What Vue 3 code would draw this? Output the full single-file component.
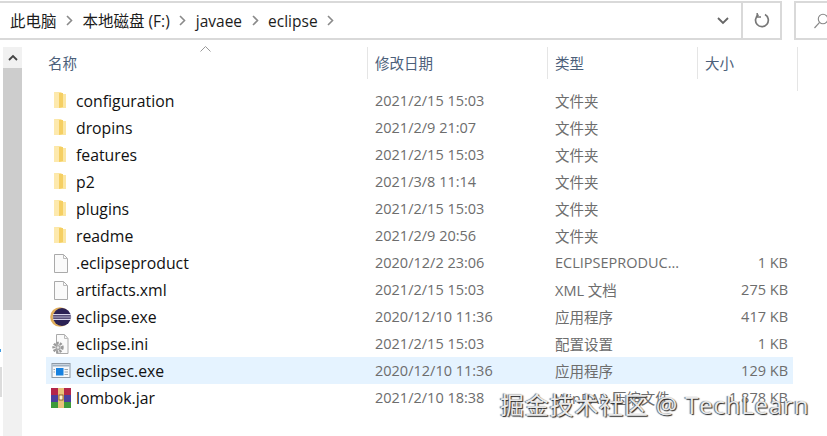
<template>
  <div class="explorer">
    <div class="toolbar">
      <div class="address">
        <div class="crumbs">
          <template v-for="c in crumbs" :key="c">
            <span class="crumb">{{ c }}</span>
            <svg class="sep" width="7" height="11" viewBox="0 0 7 11"><path d="M1 1l4.5 4.5L1 10" fill="none" stroke="#8a8a8a" stroke-width="1.6" /></svg>
          </template>
        </div>
        <div class="drop">
          <svg width="12" height="8" viewBox="0 0 12 8"><path d="M1 1l5 5 5-5" fill="none" stroke="#666" stroke-width="1.8" /></svg>
        </div>
        <div class="refresh">
          <svg width="16" height="17" viewBox="0 0 16 17"><path d="M4.5 2.8A6.4 6.4 0 1 0 11 2.6" fill="none" stroke="#777" stroke-width="1.7" /><path d="M3.2 1v4h3.8" fill="none" stroke="#777" stroke-width="1.5" /></svg>
        </div>
      </div>
      <div class="search">
        <svg width="16" height="16" viewBox="0 0 16 16"><circle cx="10" cy="6" r="4.7" fill="none" stroke="#888" stroke-width="1.1" /><path d="M6.6 9.4L1.5 15" stroke="#888" stroke-width="1.2" /></svg>
      </div>
    </div>
    <div class="main">
      <div class="scrollbar">
        <div class="sb-btn">
          <svg width="10" height="7" viewBox="0 0 10 7"><path d="M1 6l4-4 4 4" fill="none" stroke="#444" stroke-width="1.8" /></svg>
        </div>
        <div class="sb-thumb"></div>
      </div>
      <div class="content">
        <div class="head">
          <svg class="sort" width="11" height="6" viewBox="0 0 11 6"><path d="M.5 5.5l5-5 5 5" fill="none" stroke="#999" /></svg>
          <div class="hcell">名称</div>
          <div class="hcell">修改日期</div>
          <div class="hcell">类型</div>
          <div class="hcell">大小</div>
        </div>
        <div class="rows">
          <div v-for="f in files" :key="f.name" class="row" :class="{ selected: f.name === 'eclipsec.exe' }">
            <div class="name">
              <svg class="icon" width="22" height="22" viewBox="0 0 22 22">
                <template v-if="f.icon === 'folder'">
                  <path d="M4 2h7l2 2h3v14H4z" fill="#fbe6a2" />
                  <path d="M9 3h4v14l-4 1z" fill="#f5cf63" />
                  <path d="M4 2l5 1v15H4z" fill="#fde9ad" />
                </template>
                <template v-else-if="f.icon === 'file'">
                  <path d="M4.5 2.5h9l4 4v14h-13z" fill="#fafafa" stroke="#aaa" />
                  <path d="M13.5 2.5v4h4" fill="none" stroke="#bbb" />
                </template>
                <template v-else-if="f.icon === 'eclipse'">
                  <circle cx="10" cy="11" r="9.8" fill="#e0ae5c" />
                  <circle cx="12" cy="11" r="9" fill="#2c2255" />
                  <path d="M3 8.6h18M2.6 11h19M3 13.4h18" stroke="#d6d4ea" stroke-width="1.2" />
                </template>
                <template v-else-if="f.icon === 'ini'">
                  <path d="M6.5 1.5h8l3.5 4v15h-11.5z" fill="#fafafa" stroke="#aaa" />
                  <path d="M14.5 1.5v4h3.5" fill="none" stroke="#bbb" />
                  <circle cx="8" cy="14.5" r="4.2" fill="none" stroke="#9a9a9a" stroke-width="3" stroke-dasharray="2 1" />
                  <circle cx="8" cy="14.5" r="2.6" fill="#a8a8a8" />
                  <circle cx="8" cy="14.5" r="1.2" fill="#e6e6e6" />
                </template>
                <template v-else-if="f.icon === 'exe'">
                  <rect x="2" y="3.5" width="18" height="14" fill="#f6f8fa" stroke="#8e9aa6" />
                  <path d="M2.5 5.5h17" stroke="#9fb1c2" stroke-width="2" />
                  <rect x="6" y="8" width="7.5" height="7.5" fill="#1681e0" />
                  <path d="M14.5 9.5h3.5M14.5 12h3.5M14.5 14.5h3.5M3.5 9.5h1.5M3.5 12h1.5" stroke="#9aa5af" />
                </template>
                <template v-else>
                  <rect x="1" y="1" width="20" height="7" fill="#b3264a" />
                  <rect x="1" y="8" width="20" height="7" fill="#4a3f9e" />
                  <rect x="1" y="15" width="20" height="6" fill="#3c9a3a" />
                  <rect x="8" y="1" width="6" height="20" fill="#e8c27a" />
                  <rect x="9" y="8" width="4" height="5" fill="#fff2cf" stroke="#7a4d17" stroke-width=".8" />
                </template>
              </svg>
              <span class="fname">{{ f.name }}</span>
            </div>
            <div class="cell">{{ f.date }}</div>
            <div class="cell">{{ f.type }}</div>
            <div class="cell size">{{ f.size }}</div>
          </div>
        </div>
      </div>
    </div>
    <div class="edge-dot"></div>
    <div class="edge-bar"></div>
    <div class="watermark">掘金技术社区 @ TechLearn</div>
  </div>
</template>

<script setup>
const crumbs = ['此电脑', '本地磁盘 (F:)', 'javaee', 'eclipse']

const files = [
  { name: 'configuration', date: '2021/2/15 15:03', type: '文件夹', size: '', icon: 'folder' },
  { name: 'dropins', date: '2021/2/9 21:07', type: '文件夹', size: '', icon: 'folder' },
  { name: 'features', date: '2021/2/15 15:03', type: '文件夹', size: '', icon: 'folder' },
  { name: 'p2', date: '2021/3/8 11:14', type: '文件夹', size: '', icon: 'folder' },
  { name: 'plugins', date: '2021/2/15 15:03', type: '文件夹', size: '', icon: 'folder' },
  { name: 'readme', date: '2021/2/9 20:56', type: '文件夹', size: '', icon: 'folder' },
  { name: '.eclipseproduct', date: '2020/12/2 23:06', type: 'ECLIPSEPRODUC...', size: '1 KB', icon: 'file' },
  { name: 'artifacts.xml', date: '2021/2/15 15:03', type: 'XML 文档', size: '275 KB', icon: 'file' },
  { name: 'eclipse.exe', date: '2020/12/10 11:36', type: '应用程序', size: '417 KB', icon: 'eclipse' },
  { name: 'eclipse.ini', date: '2021/2/15 15:03', type: '配置设置', size: '1 KB', icon: 'ini' },
  { name: 'eclipsec.exe', date: '2020/12/10 11:36', type: '应用程序', size: '129 KB', icon: 'exe' },
  { name: 'lombok.jar', date: '2021/2/10 18:38', type: 'WinRAR 压缩文件', size: '1,878 KB', icon: 'jar' }
]
</script>

<style>
html, body {
  margin: 0;
  background: #fff;
  overflow: hidden;
}
</style>

<style scoped>
.explorer {
  position: relative;
  width: 827px;
  height: 436px;
  overflow: hidden;
  background: #fff;
  font-family: "Open Sans", "Noto Sans CJK SC", sans-serif;
  font-size: 15px;
}

.toolbar {
  display: flex;
  height: 40px;
  padding-top: 1px;
  box-sizing: border-box;
  gap: 12px;
}

.address {
  flex: 0 0 782px;
  display: flex;
  border-top: 2px solid #d9d9d9;
  border-bottom: 2px solid #d9d9d9;
  border-right: 2px solid #d9d9d9;
  box-sizing: border-box;
}

.crumbs {
  flex: 1;
  display: flex;
  align-items: center;
  padding-left: 10px;
  color: #1c1c1c;
  font-size: 15.5px;
}

.crumb {
  white-space: nowrap;
}

.sep {
  margin: 0 9.5px;
}

.drop {
  width: 24px;
  margin-right: 6px;
  display: flex;
  align-items: center;
  justify-content: center;
}

.refresh {
  width: 37px;
  border-left: 2px solid #d9d9d9;
  display: flex;
  align-items: center;
  justify-content: center;
}

.search {
  flex: 1;
  border: 2px solid #d9d9d9;
  border-right: none;
  display: flex;
  align-items: center;
  padding-left: 17px;
}

.main {
  display: flex;
  height: 396px;
}

.scrollbar {
  flex: 0 0 19px;
  margin: 7px 0 0 3px;
  background: #f1f1f1;
  display: flex;
  flex-direction: column;
}

.sb-btn {
  height: 21px;
  display: flex;
  align-items: center;
  justify-content: center;
}

.sb-thumb {
  height: 242px;
  background: #cdcdcd;
}

.content {
  flex: 1;
  padding-left: 24px;
}

.head {
  position: relative;
  display: grid;
  grid-template-columns: 320px 180px 150px 100px;
  height: 44px;
  margin: 7px 0 0 1px;
  width: 751px;
  box-sizing: border-box;
  border-right: 1px solid #e5e5e5;
}

.sort {
  position: absolute;
  left: 153px;
  top: -1px;
}

.hcell {
  display: flex;
  align-items: center;
  height: 32px;
  padding: 0 0 2px 7px;
  box-sizing: border-box;
  border-left: 1px solid #e5e5e5;
  color: #4c607a;
  font-size: 14.5px;
}

.hcell:first-of-type {
  border-left: none;
  padding-left: 1px;
}

.rows {
  margin-top: -4px;
}

.row {
  display: grid;
  grid-template-columns: 322px 180px 150px 95px;
  width: 747px;
  height: 27px;
  align-items: center;
}

.selected {
  background: #e5f3ff;
}

.name {
  display: flex;
  align-items: center;
  padding-left: 4px;
  gap: 4px;
  min-width: 0;
}

.icon {
  flex: none;
}

.fname {
  color: #111;
  font-size: 15.8px;
  white-space: nowrap;
}

.cell {
  padding-left: 7px;
  color: #6d6d6d;
  font-size: 14.5px;
  white-space: nowrap;
  overflow: hidden;
}

.size {
  padding: 0 5px 0 0;
  text-align: right;
}

.edge-dot {
  position: absolute;
  left: 0;
  top: 349px;
  width: 1px;
  height: 3px;
  background: #3f9be0;
}

.edge-bar {
  position: absolute;
  left: 0;
  top: 367px;
  width: 2px;
  height: 30px;
  background: #dcdcdc;
}

.watermark {
  position: absolute;
  left: 500px;
  top: 389px;
  font-size: 24px;
  letter-spacing: .8px;
  line-height: 32px;
  color: #e9e9e9;
  white-space: nowrap;
  text-shadow: 1px 1px 1px #222, -1px 0 1px #666;
}
</style>
